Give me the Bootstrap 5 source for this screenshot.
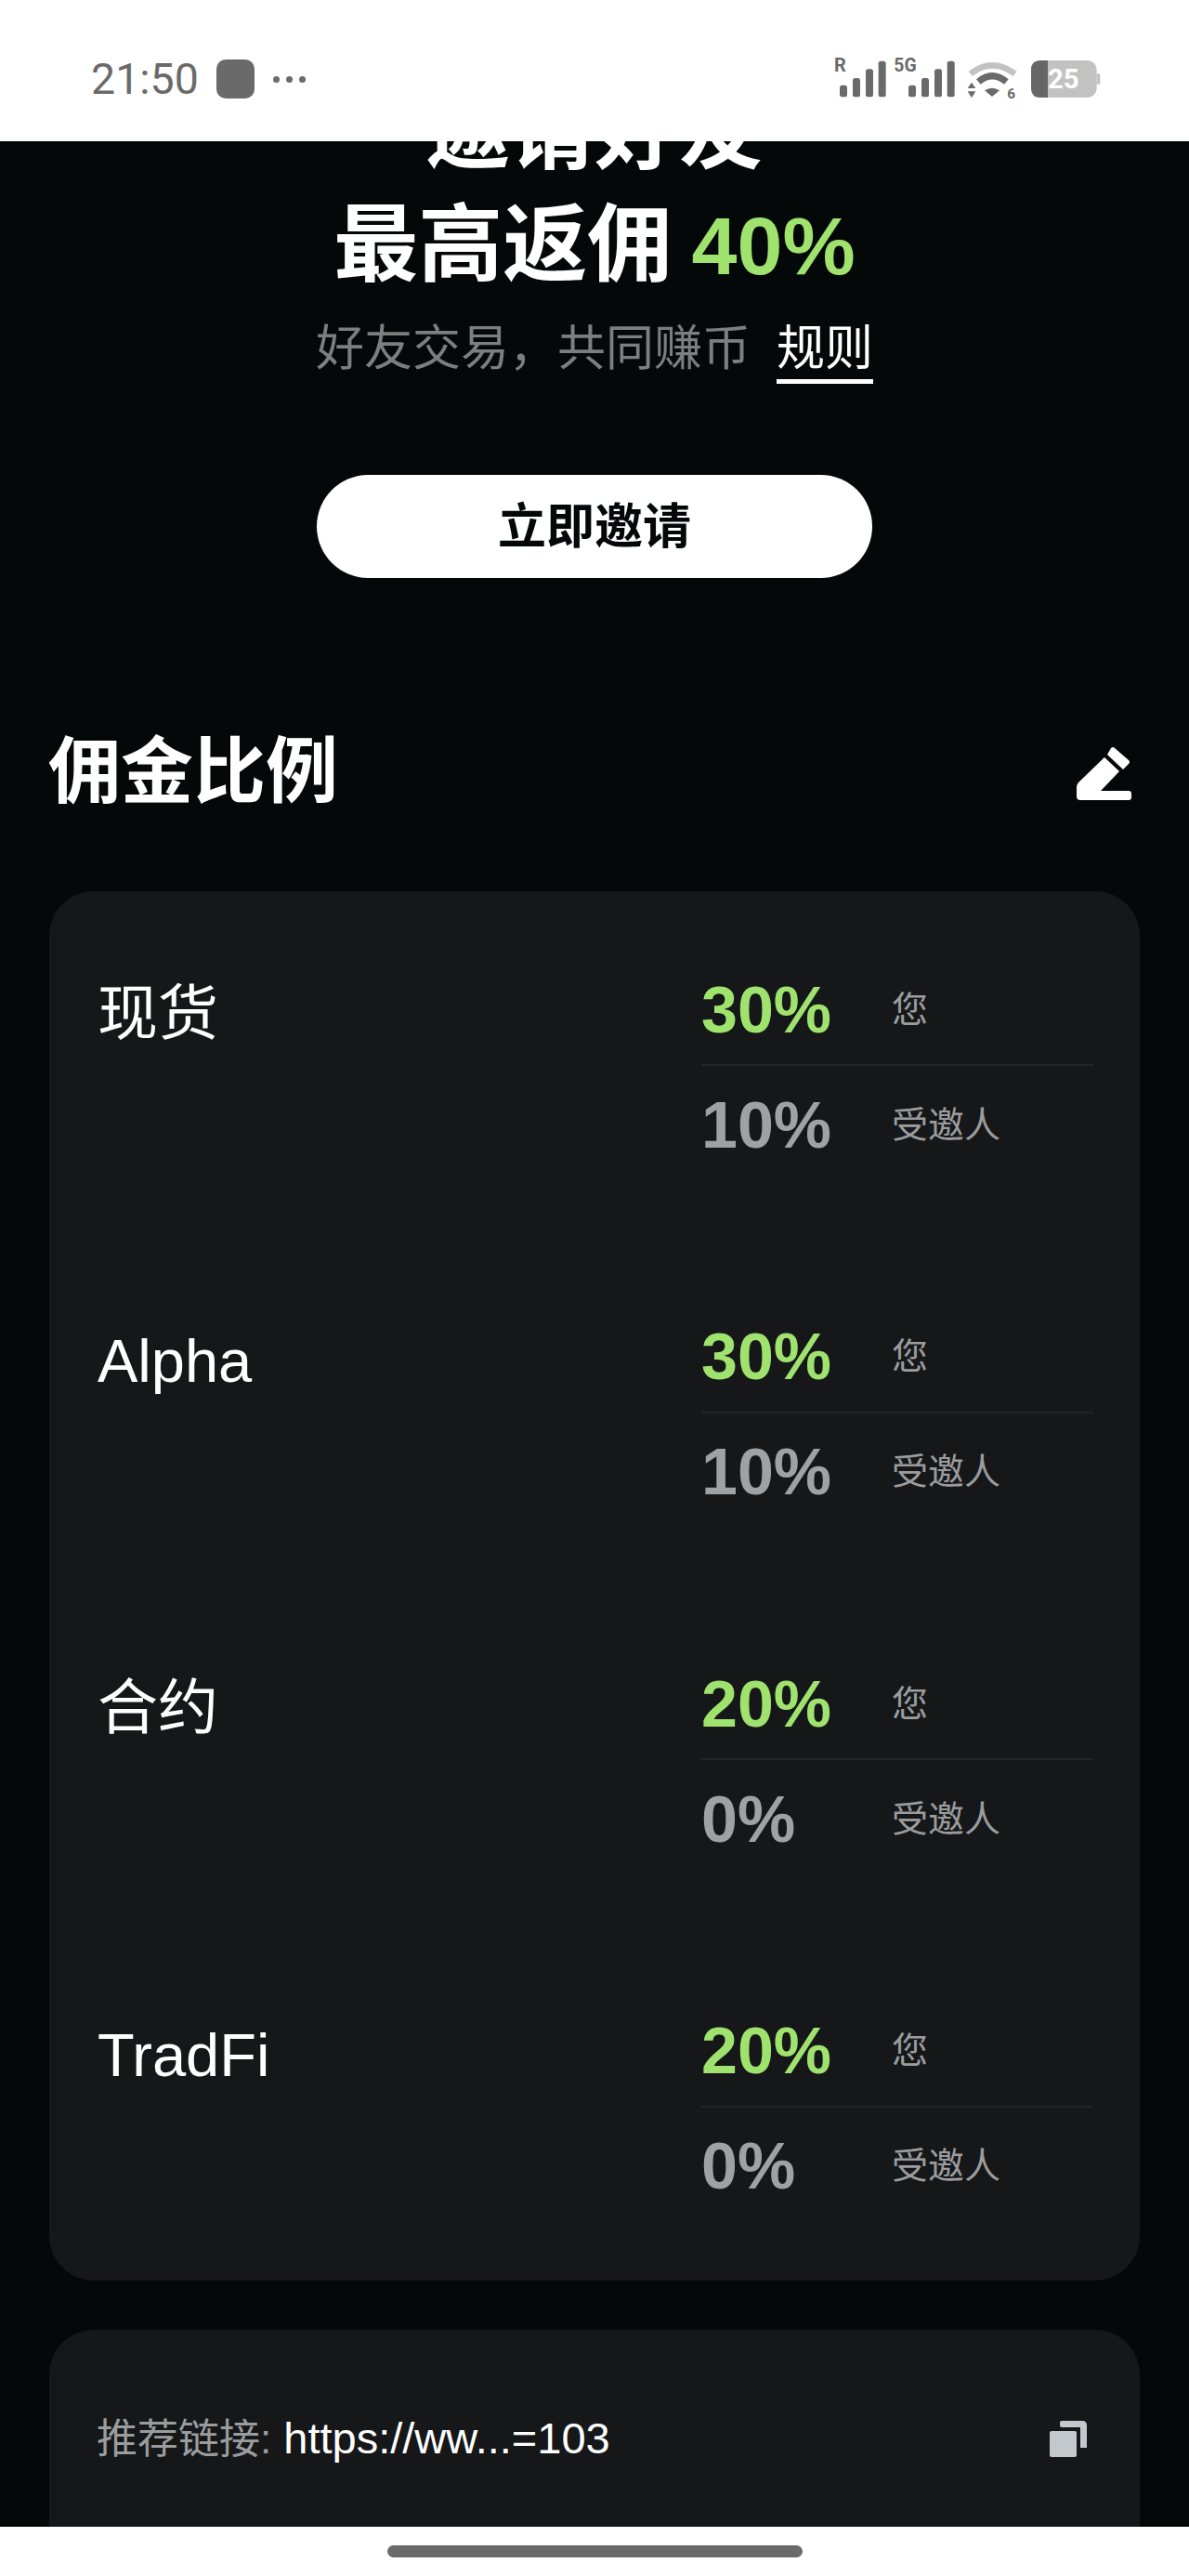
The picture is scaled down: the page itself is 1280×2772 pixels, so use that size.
<!DOCTYPE html>
<html lang="zh">
<head>
  <meta charset="UTF-8" />
  <title>邀请好友</title>
  <meta name="viewport" content="width=device-width, initial-scale=1" />
  <link href="https://cdn.jsdelivr.net/npm/bootstrap@5.3.3/dist/css/bootstrap.min.css" rel="stylesheet">
  <style>
    html, body {
      height: 100%;
      overflow: hidden;
    }
    body {
      background: #fff;
      font-family: "Liberation Sans", "Noto Sans CJK SC", sans-serif;
    }
    .phone-status {
      height: 152px;
      padding: 0 95px 0 98px;
      color: #6a6a6a;
    }
    .clock {
      font-family: Roboto, sans-serif;
      font-size: 46.5px;
      line-height: 1;
    }
    .app-square {
      width: 41px;
      height: 42px;
      border-radius: 10px;
      background: #6a6a6a;
      margin: 0 20px 0 19px;
    }
    .more-dots {
      gap: 7px;
    }
    .more-dots i {
      width: 7px;
      height: 7px;
      border-radius: 50%;
      background: #6a6a6a;
    }
    .status-left {
      padding-top: 18px;
    }
    .screen {
      background: #050808;
      color: #fff;
      min-height: 0;
    }
    .scroll-pane {
      margin-top: -71px;
    }
    .hero-title {
      font-size: 91px;
      font-weight: 700;
      line-height: 124px;
      margin: 0;
    }
    .hero-title + .hero-title {
      margin-top: -3px;
      word-spacing: -4px;
    }
    .accent {
      color: #9fe26d;
    }
    .hero-rate {
      font-size: 88px;
    }
    .hero-sub {
      font-size: 52px;
      line-height: 72px;
      color: #7d7f7f;
      margin: 12px 0 0;
    }
    .rule-link {
      color: #fff;
      text-decoration: none;
      border-bottom: 5px solid #fff;
      margin-left: 28px;
      display: inline-block;
      line-height: 66px;
    }
    .invite-btn {
      width: 598px;
      height: 111px;
      border-radius: 56px;
      background: #fff;
      border: 0;
      color: #050808;
      font-size: 52px;
      font-weight: 700;
      margin-top: 98px;
    }
    .section-head {
      padding: 4px 62px 0 52px;
      margin-top: 153px;
      height: 110px;
    }
    .section-title {
      font-size: 78px;
      font-weight: 700;
      margin: 0;
    }
    .panel {
      margin: 0 53px;
      background: #151719;
      border-radius: 48px;
    }
    .rates-panel {
      margin-top: 74px;
      padding: 64px 50px 62px 52px;
    }
    .rate-block + .rate-block {
      margin-top: 125.5px;
    }
    .rate-name {
      width: 650px;
      font-size: 65px;
      line-height: 124px;
      padding-top: 6px;
    }
    .rate-line {
      height: 122px;
      padding-top: 6px;
    }
    .rate-line + .rate-line {
      height: 126px;
      padding-top: 4px;
      border-top: 2px solid #222426;
    }
    .rate-num {
      width: 205px;
      font-size: 70px;
      font-weight: 700;
    }
    .rate-num.muted-num {
      color: #9ea2a4;
    }
    .rate-label {
      font-size: 39px;
      color: #9a9c9e;
    }
    .link-panel {
      margin-top: 53px;
      height: 400px;
      padding: 59px 57px 0 51px;
      font-size: 47px;
    }
    .link-row {
      height: 118px;
    }
    .link-key {
      color: #9a9c9e;
      font-size: 44px;
    }
    .home-bar {
      height: 53px;
      background: #fff;
    }
    .home-pill {
      width: 447px;
      height: 13px;
      border-radius: 7px;
      background: #6a6a6a;
    }
  </style>
</head>
<body>

<div class="d-flex flex-column vh-100">
  <div class="phone-status d-flex align-items-center justify-content-between flex-shrink-0">
    <div class="status-left d-flex align-items-center">
      <span class="clock">21:50</span>
      <span class="app-square"></span>
      <span class="more-dots d-flex"><i></i><i></i><i></i></span>
    </div>
    <svg class="mt-3" width="290" height="50" viewBox="165 85 870 150">
      <g fill="#6a6a6a">
        <text x="174" y="140" font-family="Roboto, sans-serif" font-size="60" font-weight="700">R</text>
        <rect x="192" y="183" width="24" height="38" rx="8" />
        <rect x="234" y="160" width="24" height="61" rx="8" />
        <rect x="276" y="131" width="24" height="90" rx="8" />
        <rect x="317" y="105" width="24" height="116" rx="8" />
        <text x="367" y="140" font-family="Roboto, sans-serif" font-size="58" font-weight="700">5G</text>
        <rect x="414" y="183" width="24" height="38" rx="8" />
        <rect x="456" y="160" width="24" height="61" rx="8" />
        <rect x="498" y="131" width="24" height="90" rx="8" />
        <rect x="539" y="105" width="24" height="116" rx="8" />
        <path d="M605 193 L618 174 L631 193 Z M605 203 L631 203 L618 224 Z" />
        <path d="M660 200 Q684 185 708 200 L684 220 Z" />
        <text x="733" y="226" font-family="Roboto, sans-serif" font-size="46" font-weight="700">6</text>
      </g>
      <path d="M640 172 Q684 135 730 172" fill="none" stroke="#6a6a6a" stroke-width="22" />
      <path d="M614 146 Q684 92 758 146" fill="none" stroke="#c2c2c2" stroke-width="20" />
      <rect x="810" y="103" width="212" height="120" rx="30" fill="#c2c2c2" />
      <rect x="1022" y="145" width="11" height="36" rx="5" fill="#c2c2c2" />
      <path d="M864 103 L840 103 Q810 103 810 133 L810 193 Q810 223 840 223 L864 223 Z" fill="#666" />
      <text x="864" y="194" font-family="Roboto, sans-serif" font-size="88" font-weight="700" fill="#fff">25</text>
    </svg>
  </div>

  <div class="screen flex-grow-1 overflow-hidden">
    <div class="scroll-pane">
      <div class="text-center">
        <h1 class="hero-title">邀请好友</h1>
        <h1 class="hero-title">最高返佣 <span class="accent hero-rate">40%</span></h1>
        <p class="hero-sub">好友交易&#xFF0C;共同赚币<a class="rule-link" href="#">规则</a></p>
        <button class="invite-btn" type="button">立即邀请</button>
      </div>

      <div class="section-head d-flex align-items-center justify-content-between">
        <h2 class="section-title">佣金比例</h2>
        <svg width="59" height="58" viewBox="0 0 59 58" fill="#fff">
          <path d="M2 39 L30 12 L46 27 L26 48 L56 48 Q59 48 59 51 L59 55 Q59 58 56 58 L4 58 Q0 58 0 54 L0 44 Q0 41 2 39 Z" />
          <path d="M37 2 Q39 0 41 2 L56 15 Q58 17 56 19 L50 25 L33 9 Z" />
        </svg>
      </div>

      <div class="panel rates-panel">
        <div id="rates"></div>
      </div>

      <div class="panel link-panel">
        <div class="link-row d-flex align-items-center justify-content-between">
          <div><span class="link-key">推荐链接:</span> https://ww...=103</div>
          <svg width="40" height="39" viewBox="0 0 40 39" fill="#c3c8cc">
            <path d="M11 2 Q11 0 13 0 L35 0 Q40 0 40 5 L40 29 L33 29 L33 7 L13 7 Q11 7 11 5 Z" />
            <rect x="0" y="11" width="29" height="28" rx="2" />
          </svg>
        </div>
      </div>
    </div>
  </div>

  <div class="home-bar d-flex justify-content-center align-items-center flex-shrink-0">
    <div class="home-pill"></div>
  </div>
</div>

<script>
  const rates = [
    { name: "现货", you: "30%", friend: "10%" },
    { name: "Alpha", you: "30%", friend: "10%" },
    { name: "合约", you: "20%", friend: "0%" },
    { name: "TradFi", you: "20%", friend: "0%" }
  ];

  document.getElementById("rates").innerHTML = rates.map(item => `
    <div class="rate-block d-flex">
      <div class="rate-name">${item.name}</div>
      <div class="flex-grow-1">
        <div class="rate-line d-flex align-items-center">
          <span class="rate-num accent">${item.you}</span>
          <span class="rate-label">您</span>
        </div>
        <div class="rate-line d-flex align-items-center">
          <span class="rate-num muted-num">${item.friend}</span>
          <span class="rate-label">受邀人</span>
        </div>
      </div>
    </div>
  `).join("");
</script>

<script src="https://cdn.jsdelivr.net/npm/bootstrap@5.3.3/dist/js/bootstrap.bundle.min.js"></script>
</body>
</html>
